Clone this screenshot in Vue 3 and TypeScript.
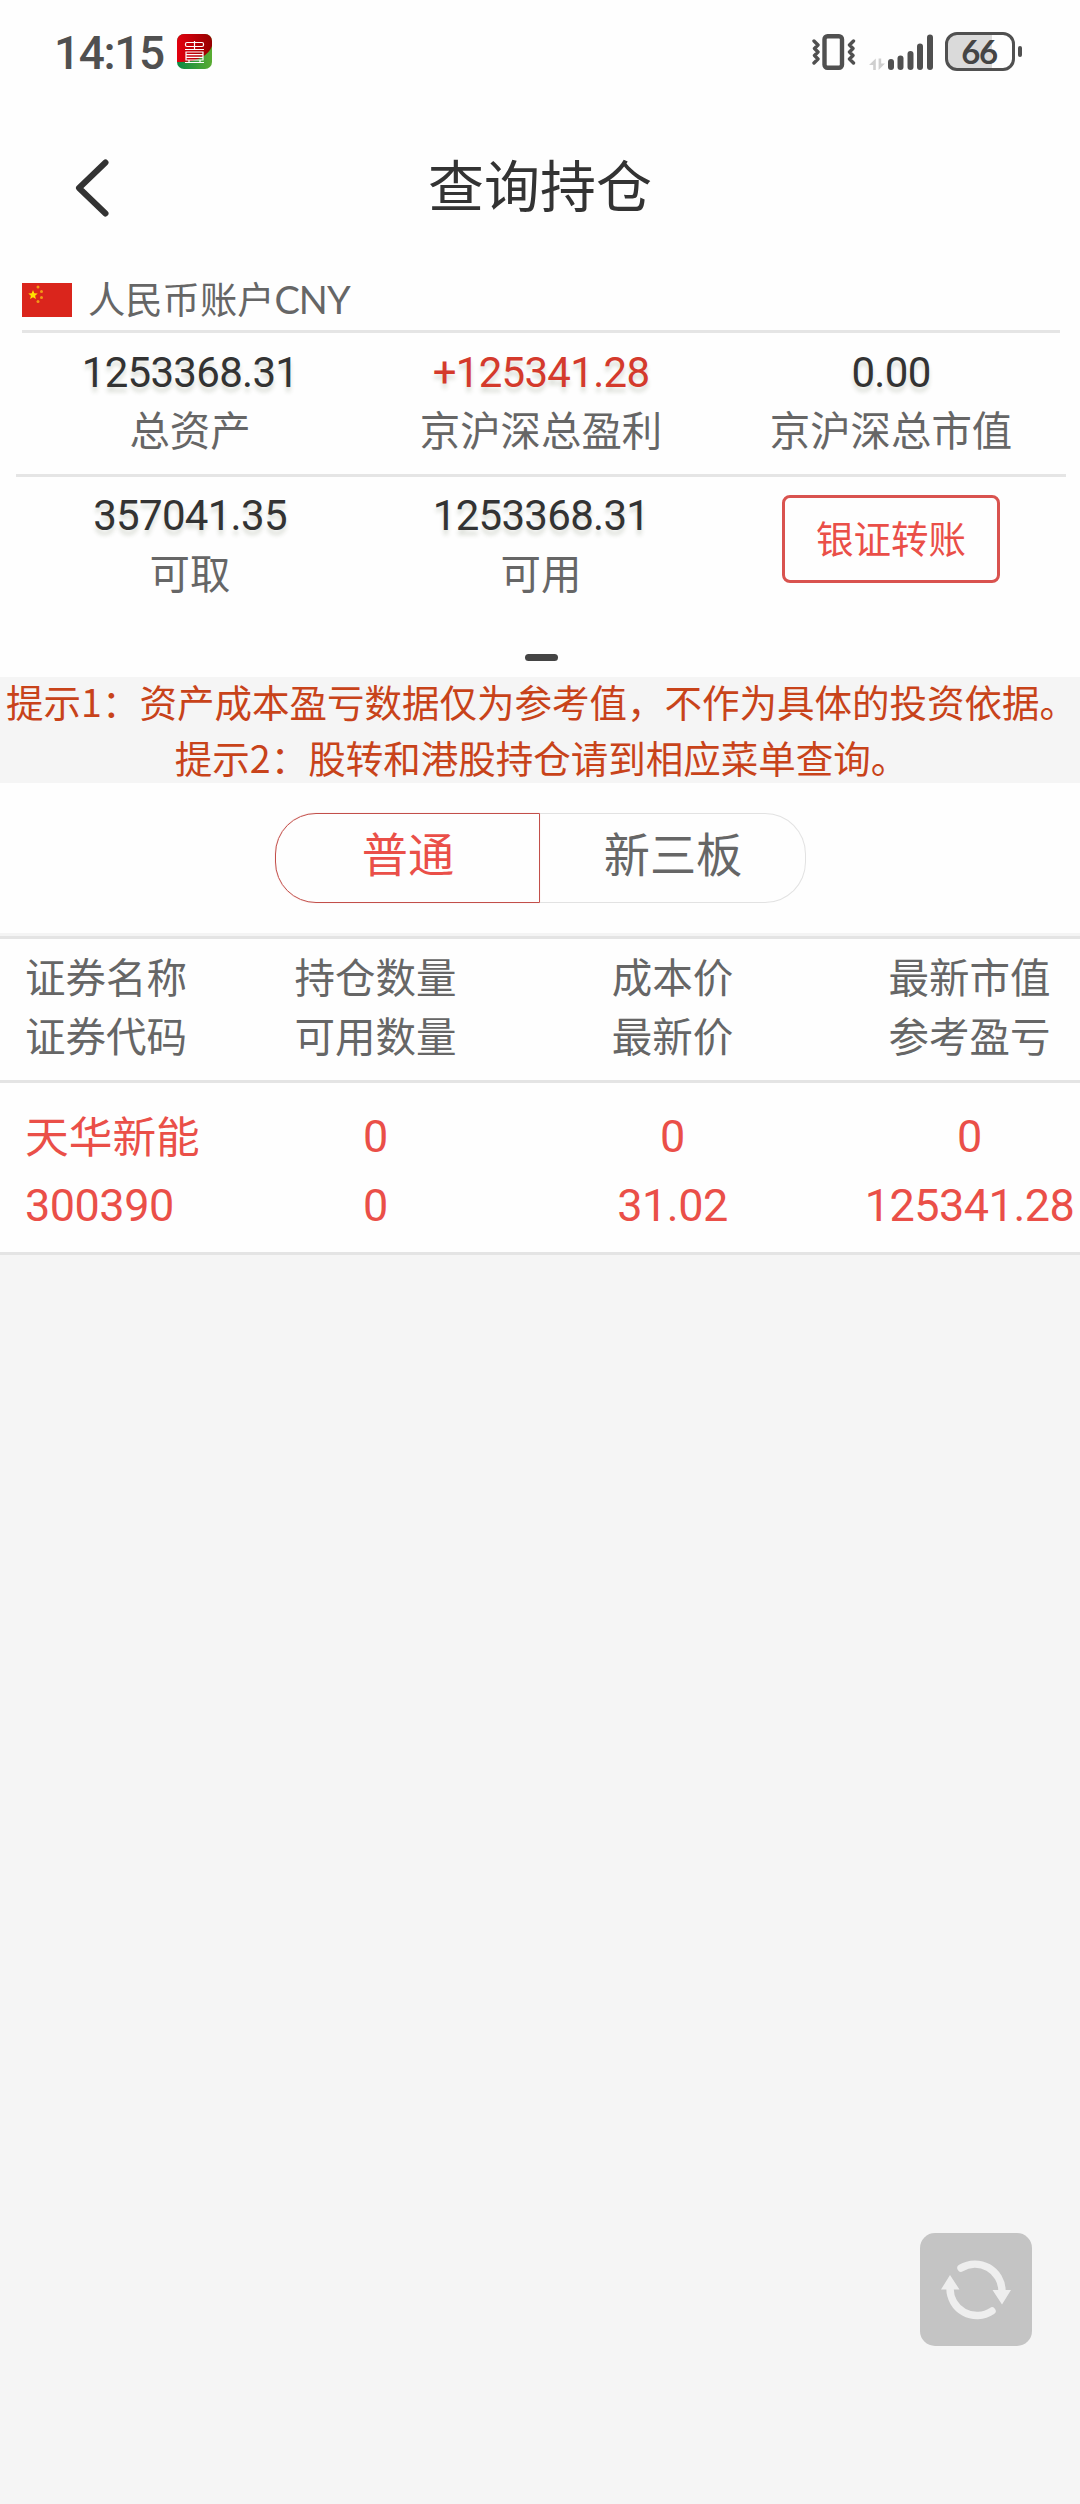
<script setup lang="ts">
interface Figure { value: string; label: string; up?: boolean }
interface Column { head: [string, string]; cells: [string, string] }

const totals: Figure[] = [
  { value: '1253368.31', label: '总资产' },
  { value: '+125341.28', label: '京沪深总盈利', up: true },
  { value: '0.00', label: '京沪深总市值' },
]
const funds: Figure[] = [
  { value: '357041.35', label: '可取' },
  { value: '1253368.31', label: '可用' },
]
const columns: Column[] = [
  { head: ['证券名称', '证券代码'], cells: ['天华新能', '300390'] },
  { head: ['持仓数量', '可用数量'], cells: ['0', '0'] },
  { head: ['成本价', '最新价'], cells: ['0', '31.02'] },
  { head: ['最新市值', '参考盈亏'], cells: ['0', '125341.28'] },
]
const smallStars = [[16, 4], [19.5, 8.5], [19.5, 14.5], [16, 18.5]]
</script>

<template>
  <div class="page">
    <div class="status">
      <span class="clock">14:15</span>
      <svg class="app-icon" width="35" height="35" viewBox="0 0 35 35">
        <defs>
          <linearGradient id="red" x1="0" x2="1"><stop offset="0" stop-color="#e3000f" /><stop offset="1" stop-color="#960000" /></linearGradient>
          <linearGradient id="green" x1="0" x2="1"><stop offset="0" stop-color="#0b8a45" /><stop offset="1" stop-color="#5aac32" /></linearGradient>
          <clipPath id="round"><rect width="35" height="35" rx="7" /></clipPath>
        </defs>
        <g clip-path="url(#round)">
          <rect width="35" height="35" fill="url(#green)" />
          <path d="M0 0H35V12C32 21 20 29 0 28Z" fill="url(#red)" />
        </g>
        <g fill="none" stroke="#fff" stroke-width="1.2">
          <rect x="8.5" y="8.5" width="18" height="4" rx="1.5" />
          <path d="M17.500 7V15M8 15.500H27M9 18V26H26V18ZM9 20.700H26M9 23.300H26M12 26V28.500M23 26V28.500M8 28.500H27" />
        </g>
      </svg>
      <svg class="vibrate" width="44" height="36" viewBox="0 0 44 36" fill="none" stroke="#505050">
        <rect x="12.500" y="2.200" width="17.500" height="31.600" rx="3" stroke-width="4.400" />
        <path d="M2 7L6 11L2.500 14.500L6 18L2.500 21.500L6 25L2 29M41.500 7L37.500 11L41 14.500L37.500 18L41 21.500L37.500 25L41.500 29" stroke-width="3.400" stroke-linejoin="round" stroke-linecap="round" />
      </svg>
      <svg class="signal" width="66" height="36" viewBox="0 0 66 36">
        <path d="M0 31L6.800 24.500V36H4.200V31ZM9.600 24.500H12.200V29.500H16L9.600 36Z" fill="#cfcfcf" />
        <g fill="#505050">
          <rect x="19" y="25" width="6" height="11" rx="3" />
          <rect x="28.500" y="21.500" width="6" height="14.500" rx="3" />
          <rect x="38.500" y="17" width="6" height="19" rx="3" />
          <rect x="48" y="9.500" width="6" height="26.500" rx="3" />
          <rect x="58" y="0.500" width="6" height="35.500" rx="3" />
        </g>
      </svg>
      <div class="battery"><span>66</span></div>
      <i class="nub"></i>
    </div>

    <header class="nav">
      <svg class="back" width="34" height="58" viewBox="0 0 34 58" fill="none" stroke="#333" stroke-width="6" stroke-linecap="round" stroke-linejoin="round">
        <path d="M30.500 3.500L4 29L30.500 54.500" />
      </svg>
      <h1>查询持仓</h1>
    </header>

    <section class="account">
      <svg class="flag" width="50" height="34" viewBox="0 0 50 34">
        <rect width="50" height="34" fill="#da251c" />
        <path d="M11 7L12.300 10.200L15.700 10.500L13.100 12.700L13.900 16L11 14.200L8.100 16L8.900 12.700L6.300 10.500L9.700 10.200Z" fill="#ffe200" />
        <circle v-for="(s, i) in smallStars" :key="i" :cx="s[0]" :cy="s[1]" r="1.5" fill="#f39a17" />
      </svg>
      <span>人民币账户<em>CNY</em></span>
    </section>

    <section class="figures totals">
      <div v-for="f in totals" :key="f.label" class="figure">
        <b :class="{ up: f.up }">{{ f.value }}</b>
        <span>{{ f.label }}</span>
      </div>
    </section>
    <section class="figures funds">
      <div v-for="f in funds" :key="f.label" class="figure">
        <b>{{ f.value }}</b>
        <span>{{ f.label }}</span>
      </div>
      <div class="figure"><button class="transfer">银证转账</button></div>
    </section>
    <div class="handle"></div>

    <section class="tips">
      <p>提示1：资产成本盈亏数据仅为参考值，不作为具体的投资依据。</p>
      <p>提示2：股转和港股持仓请到相应菜单查询。</p>
    </section>

    <div class="tabs">
      <button class="tab active">普通</button>
      <button class="tab">新三板</button>
    </div>

    <section class="table head">
      <div v-for="c in columns" :key="c.head[0]" class="col"><span v-for="t in c.head" :key="t">{{ t }}</span></div>
    </section>
    <section class="table row">
      <div v-for="c in columns" :key="c.head[0]" class="col"><span v-for="(t, i) in c.cells" :key="i" :class="{ num: /^[\d.]+$/.test(t) }">{{ t }}</span></div>
    </section>

    <button class="refresh" aria-label="刷新">
      <svg width="112" height="113" viewBox="0 0 112 113">
        <g fill="none" stroke="#eee" stroke-width="7.400" stroke-linecap="round">
          <path d="M41 35A27 27 0 0 1 82 58" />
          <path d="M72 78A27 27 0 0 1 30 55" />
        </g>
        <path d="M72.500 57H91L82 71.500ZM21 56.500H39.500L30 42Z" fill="#eee" />
      </svg>
    </button>
  </div>
</template>

<style>
body { margin: 0; background: #f5f5f5; }
</style>

<style scoped>
.page {
  position: relative;
  width: 1080px;
  height: 2504px;
  overflow: hidden;
  background: #f5f5f5;
  color: #666;
  font-family: "Noto Sans CJK SC", sans-serif;
}
.page * { box-sizing: border-box; }
button { padding: 0; background: none; font: inherit; color: inherit; border: 0; }
.status { display: flex; align-items: center; height: 103px; padding-left: 54px; background: #fefefe; }
.clock { width: 123px; margin-top: 3px; color: #505050; font: 500 46px/60px Roboto, sans-serif; letter-spacing: -1.4px; white-space: nowrap; }
.app-icon { flex: none; }
.vibrate { margin-left: 600px; flex: none; }
.signal { margin-left: 13px; flex: none; }
.battery {
  display: flex; align-items: center; justify-content: center;
  width: 70px; height: 39px; margin-left: 10px; flex: none;
  border: 3px solid #505050; border-radius: 12px;
  background: linear-gradient(90deg, #dadada 44px, #fefefe 44px);
}
.battery span { margin-top: -2px; margin-right: 2px; color: #444; font: 700 33px/36px "Lato", sans-serif; letter-spacing: -1.5px; }
.nub { width: 4px; height: 11px; margin-left: 3px; border-radius: 2px; background: #505050; }
.nav { display: flex; align-items: center; height: 169px; padding-left: 75px; background: #fefefe; }
.back { flex: none; margin-top: 1px; }
h1 { margin: 0 109px 10px 0; flex: 1; text-align: center; color: #333; font-size: 56px; font-weight: 400; line-height: 70px; }
.account { display: flex; align-items: center; height: 58px; padding-left: 22px; background: #fefefe; }
.flag { margin-top: -2px; }
.account span { margin: -6px 0 0 16px; font-size: 37.3px; line-height: 50px; }
.account em { font-family: Lato, sans-serif; font-style: normal; font-size: 38px; line-height: 1; letter-spacing: -1px; }
.figures { display: flex; padding: 0 15px; background: #fefefe; }
.totals { height: 144px; background: linear-gradient(#e5e5e5, #e5e5e5) 22px 0 / 1038px 3px no-repeat #fefefe; padding-top: 9px; }
.funds { height: 180px; background: linear-gradient(#e5e5e5, #e5e5e5) 16px 0 / 1050px 3px no-repeat #fefefe; padding-top: 8px; }
.figure { display: flex; flex-direction: column; align-items: center; width: 350px; }
.figure + .figure { padding-left: 2px; }
.figure b { padding-top: 7px; color: #333; font-family: Roboto, sans-serif; font-size: 42px; font-weight: 400; line-height: 53px; letter-spacing: -0.7px; text-shadow: 0 5px 4px rgba(60, 80, 40, 0.18); }
.figure b.up { color: #d43a2c; }
.figure span { font-size: 40.4px; line-height: 60px; }
.funds .figure span { line-height: 60.5px; }
.transfer { width: 218px; height: 88px; margin-top: 13px; padding-bottom: 5px; border: 3px solid #d9534f; border-radius: 8px; color: #ea4f48; font-size: 37.5px; }
.handle { height: 23px; background: #fefefe; display: flex; justify-content: center; }
.handle::before { content: ""; width: 33px; height: 7px; margin-left: 2px; border-radius: 4px; background: #444; }
.tips { display: flex; flex-direction: column; align-items: center; height: 106px; padding-left: 3px; color: #c8431a; font-size: 37.5px; line-height: 56px; }
.tips p { margin: 0; white-space: nowrap; }
.tips p:first-child { margin-top: -4px; }
.tabs { display: flex; justify-content: center; height: 150px; padding-top: 30px; background: #fefefe; }
.tab { width: 266px; height: 90px; padding: 0 0 13px 2px; border: 1px solid #e2e2e2; border-left: 0; border-radius: 0 41px 41px 0; font-size: 46.2px; }
.tab.active { width: 265px; border: 1px solid #c24f4a; border-radius: 41px 0 0 41px; color: #ea4f48; box-shadow: 0 0 1px #f3b5b2; }
.table { display: flex; background: #fefefe; }
.head { height: 147px; padding-top: 9.5px; border-top: 3px solid #f4f4f4; box-shadow: inset 0 3px #e4e4e4; font-size: 40.5px; line-height: 59.5px; }
.row { height: 175px; padding-top: 17px; border-top: 3px solid #e4e4e4; border-bottom: 3px solid #e4e4e4; color: #ea4f48; font-size: 43.7px; line-height: 69px; }
.col { display: flex; flex-direction: column; align-items: center; width: 297px; flex: none; white-space: nowrap; }
.col:first-child { width: 227px; padding-left: 25px; align-items: flex-start; }
.num { padding: 6px 0 2px; font-family: Roboto, sans-serif; font-size: 45px; line-height: 61px; letter-spacing: -0.5px; }
.refresh { position: absolute; left: 920px; top: 2233px; width: 112px; height: 113px; border-radius: 15px; background: #c4c4c4; }
.refresh svg { display: block; }
</style>
